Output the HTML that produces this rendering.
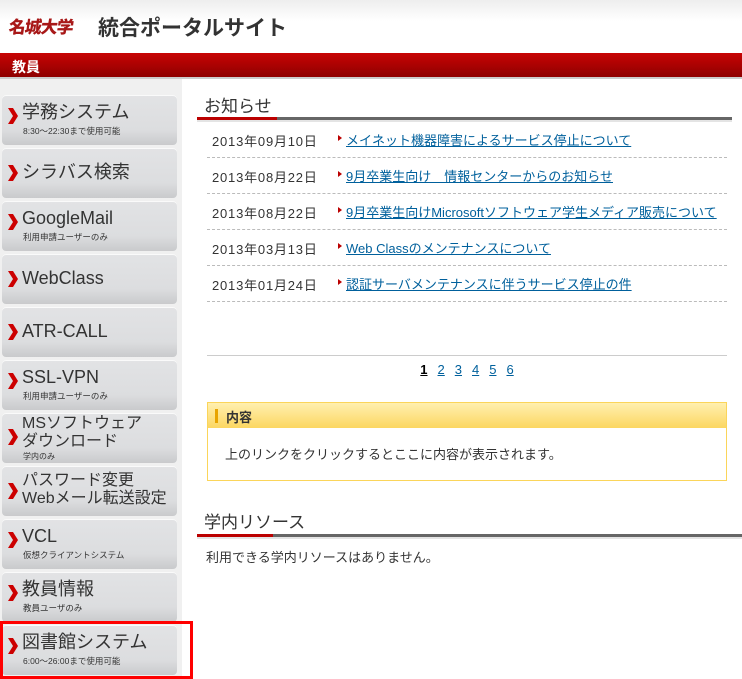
<!DOCTYPE html>
<html><head><meta charset="utf-8">
<style>
*{margin:0;padding:0;box-sizing:border-box}
body{width:742px;height:679px;overflow:hidden;background:#fff;font-family:"Liberation Sans","Noto Sans CJK JP",sans-serif;position:relative;color:#333}
.abs{position:absolute}
#hdr{left:0;top:0;width:742px;height:53px;background:linear-gradient(#eee,#fff 40%)}
#logo{left:9px;top:13px;font-family:"Noto Sans CJK JP",sans-serif;font-weight:900;color:#a81818;font-size:17px;letter-spacing:-1px;transform:skewX(-8deg)}
#title{left:98px;top:12px;font-size:21px;font-weight:bold;color:#333}
#bar{left:0;top:53px;width:742px;height:24px;background:linear-gradient(#c80404,#8e0000);color:#fff;font-weight:bold;font-size:14px;padding:4px 0 0 12px}
#barline{left:0;top:77px;width:742px;height:2px;background:#ccc}
#side{left:0;top:79px;width:182px;height:600px;background:#f0f0f0}
.btn{position:absolute;left:2px;width:175px;height:50px;border-radius:4px;background:linear-gradient(#e2e3e5,#dcdddf 70%,#c9cacc);box-shadow:inset 0 1px 0 #fafafa}
.btn svg{position:absolute;left:5px;top:12px}
.btn .t{position:absolute;left:20px;top:7px;font-size:18px;color:#333;white-space:nowrap;line-height:20px}
.btn .s{position:absolute;left:21px;top:30px;font-size:8.5px;color:#333;white-space:nowrap}
.btn .t2{font-size:16px;line-height:18px;top:2px}
h2{position:absolute;font-size:16px;font-weight:normal;color:#333}
.ul{position:absolute;height:3px;background:#666}
.ul i{display:block;width:80px;height:3px;background:#b00}
.row{position:absolute;left:207px;width:520px;height:36px;border-bottom:1px dashed #bbb;font-size:13px}
.row .d{position:absolute;left:5px;top:9px;color:#333;letter-spacing:0.8px}
.row .a{position:absolute;left:131px;top:13px;width:0;height:0;border-left:4px solid #b00;border-top:3px solid transparent;border-bottom:3px solid transparent}
.row a{position:absolute;left:139px;top:8px;color:#00609c;text-decoration:underline;white-space:nowrap}
#pg{left:207px;top:355px;width:520px;border-top:1px solid #ccc;text-align:center;font-size:13px;padding-top:6px}
#pg a{color:#00609c;text-decoration:underline;margin:0 5px}
#pg b{color:#000;text-decoration:underline;margin:0 5px}
#box{left:207px;top:402px;width:520px;height:79px;border:1px solid #fbd55a}
#boxh{height:25px;background:linear-gradient(#fff0b0,#fcd761);font-size:13px;font-weight:bold;padding:4px 0 0 18px;position:relative}
#boxh:before{content:"";position:absolute;left:7px;top:6px;width:3px;height:14px;background:#e8a400}
#boxt{font-size:13px;padding:16px 0 0 17px}
</style></head><body>
<div id="hdr" class="abs"></div>
<div id="logo" class="abs">名城大学</div>
<div id="title" class="abs">統合ポータルサイト</div>
<div id="bar" class="abs">教員</div>
<div id="barline" class="abs"></div>
<div id="side" class="abs"></div>

<div class="btn" style="top:95px"><svg width="12" height="18"><polygon points="1,1 6,1 11,9 6,17 1,17 6,9" fill="#c00"/></svg><div class="t">学務システム</div><div class="s">8:30～22:30まで使用可能</div></div>
<div class="btn" style="top:148px"><svg width="12" height="18" style="top:16px"><polygon points="1,1 6,1 11,9 6,17 1,17 6,9" fill="#c00"/></svg><div class="t" style="top:14px">シラバス検索</div></div>
<div class="btn" style="top:201px"><svg width="12" height="18"><polygon points="1,1 6,1 11,9 6,17 1,17 6,9" fill="#c00"/></svg><div class="t">GoogleMail</div><div class="s">利用申請ユーザーのみ</div></div>
<div class="btn" style="top:254px"><svg width="12" height="18" style="top:16px"><polygon points="1,1 6,1 11,9 6,17 1,17 6,9" fill="#c00"/></svg><div class="t" style="top:14px">WebClass</div></div>
<div class="btn" style="top:307px"><svg width="12" height="18" style="top:16px"><polygon points="1,1 6,1 11,9 6,17 1,17 6,9" fill="#c00"/></svg><div class="t" style="top:14px">ATR-CALL</div></div>
<div class="btn" style="top:360px"><svg width="12" height="18"><polygon points="1,1 6,1 11,9 6,17 1,17 6,9" fill="#c00"/></svg><div class="t">SSL-VPN</div><div class="s">利用申請ユーザーのみ</div></div>
<div class="btn" style="top:413px"><svg width="12" height="18" style="top:15px"><polygon points="1,1 6,1 11,9 6,17 1,17 6,9" fill="#c00"/></svg><div class="t t2">MSソフトウェア<br>ダウンロード</div><div class="s" style="top:38px;font-size:8px">学内のみ</div></div>
<div class="btn" style="top:466px"><svg width="12" height="18" style="top:16px"><polygon points="1,1 6,1 11,9 6,17 1,17 6,9" fill="#c00"/></svg><div class="t t2" style="top:6px">パスワード変更<br>Webメール転送設定</div></div>
<div class="btn" style="top:519px"><svg width="12" height="18"><polygon points="1,1 6,1 11,9 6,17 1,17 6,9" fill="#c00"/></svg><div class="t">VCL</div><div class="s">仮想クライアントシステム</div></div>
<div class="btn" style="top:572px"><svg width="12" height="18"><polygon points="1,1 6,1 11,9 6,17 1,17 6,9" fill="#c00"/></svg><div class="t">教員情報</div><div class="s">教員ユーザのみ</div></div>
<div class="btn" style="top:625px"><svg width="12" height="18"><polygon points="1,1 6,1 11,9 6,17 1,17 6,9" fill="#c00"/></svg><div class="t">図書館システム</div><div class="s">6:00～26:00まで使用可能</div></div>
<div class="abs" style="left:0;top:621px;width:193px;height:58px;border:3px solid #f00"></div>

<h2 style="left:204px;top:92px;font-size:17px">お知らせ</h2>
<div class="ul" style="left:197px;top:117px;width:535px"><i></i></div>
<div class="abs" style="left:197px;top:120px;width:535px;height:2px;background:#e4e4e4"></div>

<div class="row" style="top:122px"><span class="d">2013年09月10日</span><span class="a"></span><a>メイネット機器障害によるサービス停止について</a></div>
<div class="row" style="top:158px"><span class="d">2013年08月22日</span><span class="a"></span><a>9月卒業生向け　情報センターからのお知らせ</a></div>
<div class="row" style="top:194px"><span class="d">2013年08月22日</span><span class="a"></span><a>9月卒業生向けMicrosoftソフトウェア学生メディア販売について</a></div>
<div class="row" style="top:230px"><span class="d">2013年03月13日</span><span class="a"></span><a>Web Classのメンテナンスについて</a></div>
<div class="row" style="top:266px"><span class="d">2013年01月24日</span><span class="a"></span><a>認証サーバメンテナンスに伴うサービス停止の件</a></div>

<div id="pg" class="abs"><b>1</b><a>2</a><a>3</a><a>4</a><a>5</a><a>6</a></div>

<div id="box" class="abs"><div id="boxh">内容</div><div id="boxt">上のリンクをクリックするとここに内容が表示されます。</div></div>

<h2 style="left:204px;top:508px;font-size:17px">学内リソース</h2>
<div class="ul" style="left:197px;top:534px;width:545px"><i style="width:76px"></i></div>
<div class="abs" style="left:197px;top:537px;width:545px;height:2px;background:#e4e4e4"></div>
<div class="abs" style="left:206px;top:547px;font-size:13px">利用できる学内リソースはありません。</div>
</body></html>
